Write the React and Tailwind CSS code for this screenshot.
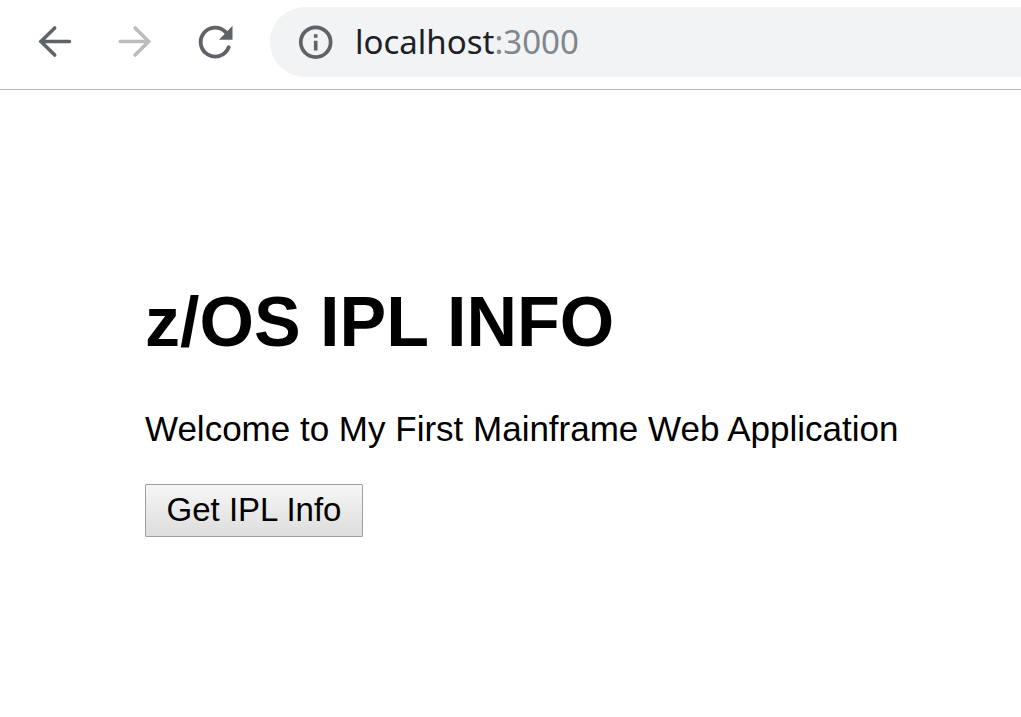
function BackIcon() {
  return (
    <svg viewBox="0 0 36 36" className="size-9" fill="none" stroke="currentColor" strokeWidth="3.5" strokeLinecap="round" aria-hidden="true">
      <path d="M32.500 17.500H3.700M17.700 3.900L3.900 17.500L17.700 31.100" />
    </svg>
  );
}

function ForwardIcon() {
  return (
    <svg viewBox="0 0 36 36" className="size-9" fill="none" stroke="currentColor" strokeWidth="3.5" strokeLinecap="round" aria-hidden="true">
      <path d="M3.300 17.500H31.900M18.100 3.900L31.700 17.500L18.100 31.100" />
    </svg>
  );
}

function ReloadIcon() {
  return (
    <svg viewBox="0 0 36 36" className="size-9" fill="none" stroke="currentColor" strokeWidth="3.800" strokeLinecap="round" aria-hidden="true">
      <path d="M31.700 23.300A14.500 14.500 0 1 1 28.700 8.100" />
      <path d="M22 15.700H35.500V1.800Z" fill="currentColor" stroke="none" />
    </svg>
  );
}

function InfoIcon() {
  return (
    <svg viewBox="0 0 34 34" className="size-[34px] shrink-0 text-[#5f6368]" fill="none" aria-hidden="true">
      <circle cx="16.700" cy="17.200" r="14.900" stroke="currentColor" strokeWidth="3.700" />
      <path d="M14.900 9.200H18.500V12.700H14.900ZM14.900 15.700H18.500V25.500H14.900Z" fill="currentColor" />
    </svg>
  );
}

export default function App() {
  return (
    <div className="min-h-screen bg-white text-black">
      <header className="flex h-[90px] items-start border-b border-[#b6b6b6] pt-[7px] pl-[37px]">
        <nav className="flex h-[70px] shrink-0 items-center gap-11 text-[#5f6368]" aria-label="Browser">
          <button type="button" aria-label="Back"><BackIcon /></button>
          <button type="button" aria-label="Forward" className="text-[#babcbe]"><ForwardIcon /></button>
          <button type="button" aria-label="Reload"><ReloadIcon /></button>
        </nav>
        <div className="ml-[37px] flex h-[70px] min-w-0 flex-1 items-center gap-[22px] rounded-l-full bg-[#f1f3f4] pl-[29px]">
          <InfoIcon />
          <a href="#" className="font-['Noto_Sans',sans-serif] text-[33px] leading-[48px] text-[#202124]">
            localhost<span className="text-[#80868b]">:3000</span>
          </a>
        </div>
      </header>
      <main className="px-[145px] pt-[192px] font-['Liberation_Sans',Arial,sans-serif]">
        <h1 className="text-[70px] leading-[80px] font-bold">z/OS IPL INFO</h1>
        <p className="mt-[47px] text-[35px] leading-[40px] whitespace-nowrap">Welcome to My First Mainframe Web Application</p>
        <button type="button" className="mt-[35px] min-w-[218px] rounded-[1px] border border-[#a0a0a0] bg-linear-to-b from-[#f6f6f6] to-[#dddddd] px-5 pt-[5px] pb-[6px] text-[33px] leading-[40px]">
          Get IPL Info
        </button>
      </main>
    </div>
  );
}
